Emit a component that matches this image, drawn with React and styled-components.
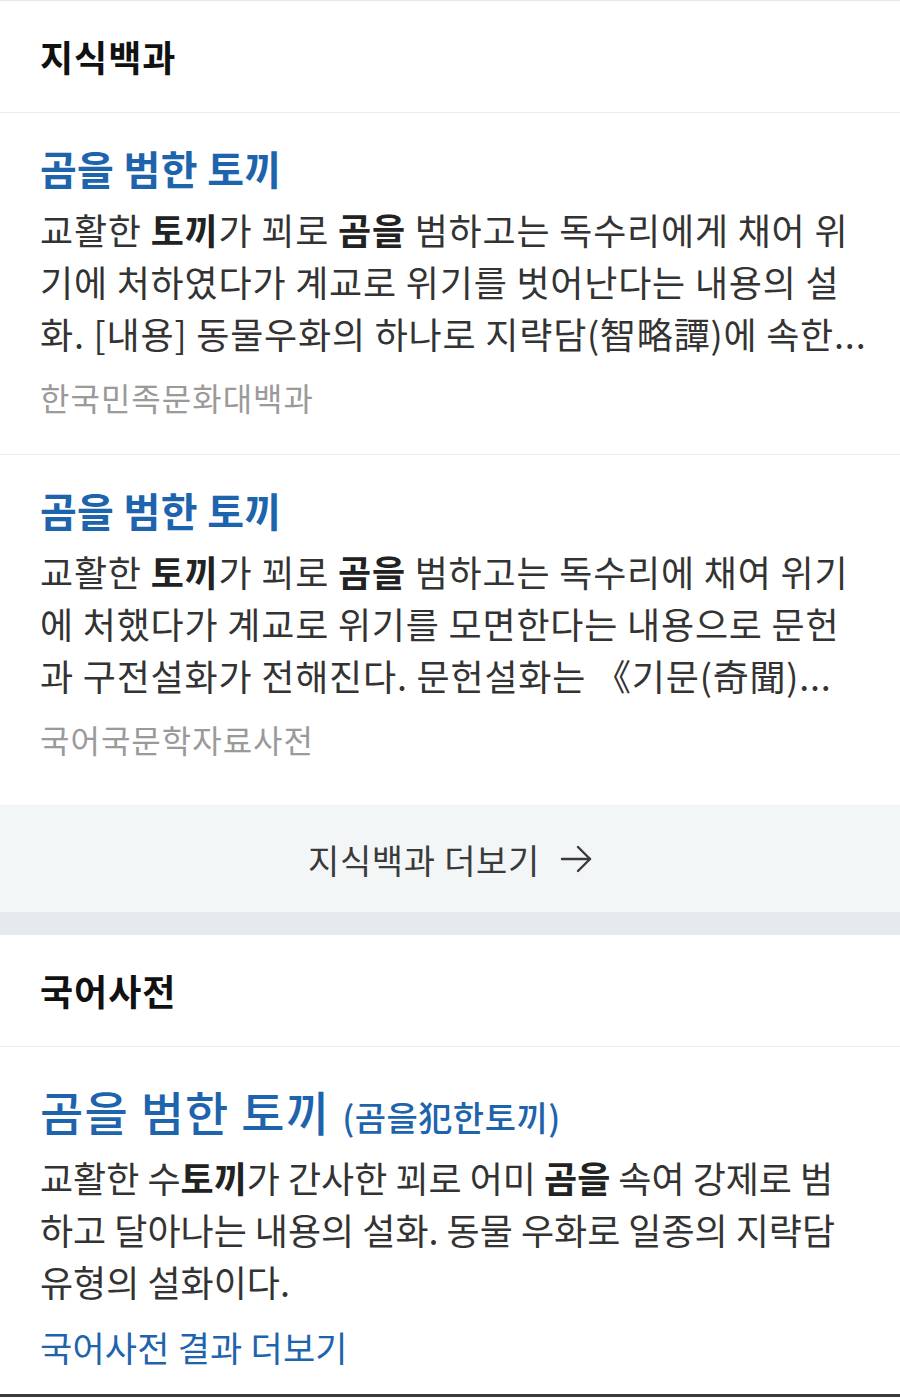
import React from "react";
import styled, { createGlobalStyle } from "styled-components";

const Global = createGlobalStyle`
  html, body { margin: 0; padding: 0; background: #fff; }
  body { font-family: "Noto Sans CJK KR", "Noto Sans", sans-serif; -webkit-font-smoothing: antialiased; }
  * { box-sizing: border-box; }
`;

const Page = styled.div`
  width: 900px;
  display: flex;
  flex-direction: column;
  border-top: 1px solid #e8e8e8;
`;

const Section = styled.section`
  display: flex;
  flex-direction: column;
  background: #fff;
  border-bottom: ${(p) => (p.$last ? "3px solid #3a3a3a" : "none")};
`;

const SectionHeader = styled.h2`
  margin: 0;
  height: 112px;
  padding: 0 40px 2px;
  display: flex;
  align-items: center;
  font-size: 36px;
  font-weight: 700;
  color: #111;
  letter-spacing: 1px;
  border-bottom: 1px solid #ececec;
`;

const Card = styled.article`
  display: flex;
  flex-direction: column;
  padding: ${(p) => (p.$last ? "31px 40px 46px" : "31px 40px 37px")};
  border-bottom: ${(p) => (p.$last ? "none" : "1px solid #ececec")};
`;

const Title = styled.h3`
  margin: 0 0 11px;
  font-size: 40px;
  line-height: 48px;
  font-weight: 700;
  color: #1d64ad;
  letter-spacing: 0.3px;
`;

const Body = styled.p`
  margin: 0;
  font-size: 36px;
  line-height: 52px;
  color: #333;
  letter-spacing: ${(p) => (p.$tight ? "0px" : "0.8px")};
  display: flex;
  flex-direction: column;
`;

const Line = styled.span`
  display: block;
  white-space: nowrap;
`;

const Strong = styled.b`
  font-weight: 700;
  color: #222;
`;

const Source = styled.div`
  margin-top: 18px;
  font-size: 32px;
  line-height: 40px;
  color: #9a9a9a;
  letter-spacing: 1px;
`;

const MoreBar = styled.a`
  display: flex;
  align-items: center;
  justify-content: center;
  gap: 20px;
  height: 107px;
  background: #f3f6f7;
  border-top: 1px solid #eef0f1;
  color: #3a3a3a;
  font-size: 34px;
  text-decoration: none;
  letter-spacing: 0.7px;
`;

const Gap = styled.div`
  height: 23px;
  background: #e7eaec;
`;

const Entry = styled.article`
  display: flex;
  flex-direction: column;
  padding: 36px 40px 23px;
`;

const DictTitle = styled.h3`
  margin: 0 0 12px;
  height: 56px;
  display: flex;
  align-items: baseline;
  gap: 12px;
  line-height: 56px;
  color: #1d64ad;
  font-weight: 400;
`;

const DictWord = styled.span`
  font-size: 47px;
  font-weight: 500;
  letter-spacing: 1.2px;
`;

const DictHanja = styled.span`
  font-size: 34px;
  line-height: 1;
  font-weight: 500;
  letter-spacing: 0.5px;
`;

const MoreLink = styled.a`
  margin-top: 16px;
  font-size: 35px;
  line-height: 48px;
  color: #1d64ad;
  text-decoration: none;
  letter-spacing: 0.2px;
`;

const Arrow = () => (
  <svg width="32" height="28" viewBox="0 0 32 28" fill="none" stroke="#3a3a3a" strokeWidth="2.4" strokeLinecap="round" strokeLinejoin="round">
    <path d="M2 14 H30" />
    <path d="M18 2 L30 14 L18 26" />
  </svg>
);

export default function App() {
  return (
    <>
      <Global />
      <Page>
        <Section>
          <SectionHeader>지식백과</SectionHeader>
          <Card>
            <Title>곰을 범한 토끼</Title>
            <Body>
              <Line>교활한 <Strong>토끼</Strong>가 꾀로 <Strong>곰을</Strong> 범하고는 독수리에게 채어 위</Line>
              <Line>기에 처하였다가 계교로 위기를 벗어난다는 내용의 설</Line>
              <Line>화. [내용] 동물우화의 하나로 지략담(智略譚)에 속한...</Line>
            </Body>
            <Source>한국민족문화대백과</Source>
          </Card>
          <Card $last>
            <Title>곰을 범한 토끼</Title>
            <Body>
              <Line>교활한 <Strong>토끼</Strong>가 꾀로 <Strong>곰을</Strong> 범하고는 독수리에 채여 위기</Line>
              <Line>에 처했다가 계교로 위기를 모면한다는 내용으로 문헌</Line>
              <Line>과 구전설화가 전해진다. 문헌설화는 《기문(奇聞)...</Line>
            </Body>
            <Source>국어국문학자료사전</Source>
          </Card>
          <MoreBar href="#">
            지식백과 더보기
            <Arrow />
          </MoreBar>
        </Section>
        <Gap />
        <Section $last>
          <SectionHeader>국어사전</SectionHeader>
          <Entry>
            <DictTitle>
              <DictWord>곰을 범한 토끼</DictWord>
              <DictHanja>(곰을犯한토끼)</DictHanja>
            </DictTitle>
            <Body $tight>
              <Line>교활한 수<Strong>토끼</Strong>가 간사한 꾀로 어미 <Strong>곰을</Strong> 속여 강제로 범</Line>
              <Line>하고 달아나는 내용의 설화. 동물 우화로 일종의 지략담</Line>
              <Line>유형의 설화이다.</Line>
            </Body>
            <MoreLink href="#">국어사전 결과 더보기</MoreLink>
          </Entry>
        </Section>
      </Page>
    </>
  );
}
